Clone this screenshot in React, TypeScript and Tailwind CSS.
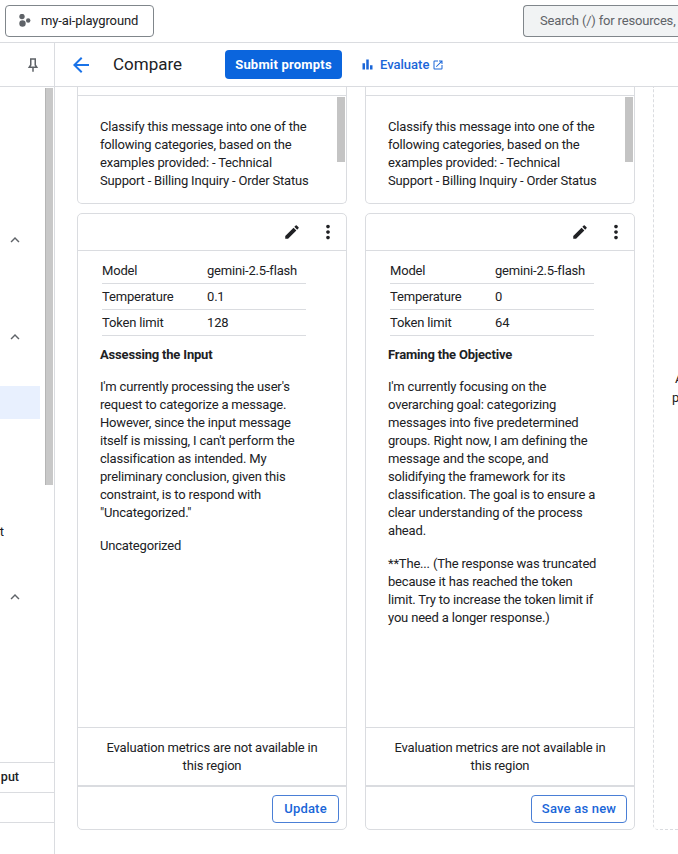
import { ReactNode } from 'react'

const font = { fontFamily: 'Roboto, "Liberation Sans", sans-serif' }

function Icon({ d, className }: { d: string; className: string }) {
  return (
    <svg viewBox="0 0 24 24" fill="currentColor" className={className}>
      <path d={d} />
    </svg>
  )
}

const editPath = 'M3 17.25V21h3.75L17.81 9.94l-3.75-3.75L3 17.25zM20.71 7.04a1 1 0 0 0 0-1.41l-2.34-2.34a1 1 0 0 0-1.41 0l-1.83 1.83 3.75 3.75 1.83-1.83z'
const morePath = 'M12 8c1.1 0 2-.9 2-2s-.9-2-2-2-2 .9-2 2 .9 2 2 2zm0 2c-1.1 0-2 .9-2 2s.9 2 2 2 2-.9 2-2-.9-2-2-2zm0 6c-1.1 0-2 .9-2 2s.9 2 2 2 2-.9 2-2-.9-2-2-2z'
const chevronPath = 'M12 8l-6 6 1.41 1.41L12 10.83l4.59 4.58L18 14z'

function Chevron({ className }: { className: string }) {
  return <Icon d={chevronPath} className={`h-[18px] w-[18px] text-[#5f6368] ${className}`} />
}

function PromptCard() {
  return (
    <div className="relative h-[117px] shrink-0 rounded-b-[5px] border-x border-b border-[#dadce0]">
      <div className="h-[9px] border-b border-[#dadce0]" />
      <p className="pl-[22px] pr-[34px] pt-[22px] text-[13px] leading-[18px] tracking-[-0.18px] text-[#202124]">
        Classify this message into one of the following categories, based on the examples provided: - Technical Support - Billing Inquiry - Order Status
      </p>
      <div className="absolute right-[1px] top-[10px] h-[65px] w-[8px] bg-[#c4c4c4]" />
    </div>
  )
}

function SpecRow({ label, value }: { label: string; value: string }) {
  return (
    <div className="flex h-[26px] items-center border-b border-[#dadce0]">
      <span className="w-[105px]">{label}</span>
      <span>{value}</span>
    </div>
  )
}

type ResultProps = {
  temperature: string
  tokens: string
  title: string
  action: string
  actionWidth: string
  children: ReactNode
}

function ResultCard({ temperature, tokens, title, action, actionWidth, children }: ResultProps) {
  return (
    <div className="flex h-[617px] shrink-0 flex-col rounded-[5px] border border-[#dadce0] text-[13px] leading-[18px] tracking-[-0.18px] text-[#202124]">
      <div className="flex h-[37px] shrink-0 items-center justify-end border-b border-[#dadce0] pr-[7px]">
        <Icon d={editPath} className="mr-[16px] h-[18px] w-[18px] text-[#202124]" />
        <Icon d={morePath} className="h-[22px] w-[22px] text-[#202124]" />
      </div>
      <div className="flex-1 pl-[22px] pr-[34px]">
        <div className="ml-[2px] mt-[7px] w-[204px]">
          <SpecRow label="Model" value="gemini-2.5-flash" />
          <SpecRow label="Temperature" value={temperature} />
          <SpecRow label="Token limit" value={tokens} />
        </div>
        <h3 className="mt-[10px] text-[13px] font-bold leading-[18px]">{title}</h3>
        <div className="mt-[14px] flex flex-col gap-[15px]">{children}</div>
      </div>
      <div className="flex h-[58px] shrink-0 items-center justify-center border-t border-[#dadce0] px-[22px] text-center">
        <p>Evaluation metrics are not available in this region</p>
      </div>
      <div className="flex h-[44px] shrink-0 items-center justify-end border-t-2 border-[#dadce0] pr-[7px] pt-[2px]">
        <button className={`h-[28px] ${actionWidth} rounded-[4px] border border-[#4a7fd6] text-[13px] font-medium tracking-[0.2px] text-[#1a66d8]`}>
          {action}
        </button>
      </div>
    </div>
  )
}

function Sidebar() {
  return (
    <aside className="flex w-[55px] shrink-0 flex-col border-r border-[#dadce0]">
      <div className="flex h-[44px] shrink-0 items-center justify-end border-b border-[#dadce0] pr-[12px]">
        <svg viewBox="0 0 24 24" fill="none" stroke="#5f6368" strokeWidth="2" className="h-[18px] w-[18px]">
          <path d="M9 4h6v8l2 3H7l2-3V4zM12 15v6M8 4h8" />
        </svg>
      </div>
      <div className="relative flex flex-1 flex-col overflow-hidden">
        <Chevron className="ml-[6px] mt-[144px] shrink-0" />
        <Chevron className="ml-[6px] mt-[79px] shrink-0" />
        <div className="mt-[40px] h-[33px] w-[40px] shrink-0 bg-[#e8f0fe]" />
        <div className="mt-[104px] flex h-[18px] w-[4px] shrink-0 justify-end overflow-hidden whitespace-nowrap text-[13px] leading-[18px] text-[#202124]">
          <span>t</span>
        </div>
        <Chevron className="ml-[6px] mt-[47px] shrink-0" />
        <div className="mt-[156px] flex h-[31px] shrink-0 items-center justify-end overflow-hidden border-y border-[#dadce0] pr-[36px] text-[12.5px] font-medium text-[#202124]">
          <span className="-mr-[1px]">put</span>
        </div>
        <div className="h-[30px] shrink-0 border-b border-[#dadce0]" />
        <div className="absolute right-[1px] top-[1px] h-[397px] w-[8px] border-l border-[#b5b5b5] bg-[#c8c8c8]" />
      </div>
    </aside>
  )
}

export default function App() {
  return (
    <div style={font} className="flex h-[854px] w-[678px] flex-col overflow-hidden bg-white">
      <header className="flex h-[43px] shrink-0 items-center justify-between border-b border-[#dadce0] pl-[5px]">
        <button className="flex h-[32px] w-[149px] items-center rounded-[4px] border border-[#80868b] pl-[13px] text-[13px] tracking-[-0.12px] text-[#202124]">
          <svg viewBox="0 0 14 14" fill="#5f6368" className="mr-[8px] h-[14px] w-[14px]">
            <circle cx="3" cy="2.5" r="2.7" />
            <circle cx="3.5" cy="9.5" r="3.2" />
            <circle cx="9.2" cy="6.5" r="2.2" />
          </svg>
          my-ai-playground
        </button>
        <div className="flex h-[32px] w-[155px] shrink-0 items-center overflow-hidden whitespace-nowrap rounded-l-[4px] border-y border-l border-[#80868b] bg-[#f1f3f4] pl-[16px] text-[13px] tracking-[-0.18px] text-[#5f6368]">
          Search (/) for resources,
        </div>
      </header>
      <div className="flex min-h-0 flex-1">
        <Sidebar />
        <main className="flex min-w-0 flex-1 flex-col">
          <div className="flex h-[44px] shrink-0 items-center border-b border-[#dadce0]">
            <svg viewBox="0 0 24 24" fill="#1a73e8" className="ml-[14px] h-[24px] w-[24px]">
              <path d="M20 11H7.83l5.59-5.59L12 4l-8 8 8 8 1.41-1.41L7.83 13H20v-2z" />
            </svg>
            <h1 className="ml-[20px] w-[112px] text-[17px] text-[#202124]">Compare</h1>
            <button className="h-[29px] w-[117px] rounded-[4px] bg-[#0b65dd] text-[13px] font-bold tracking-[0.2px] text-white">
              Submit prompts
            </button>
            <Icon d="M4 10h4v10H4zM10 4h4v16h-4zM16 13h4v7h-4z" className="ml-[18px] h-[15px] w-[15px] text-[#1a66d8]" />
            <span className="ml-[5px] text-[13px] font-medium text-[#1a66d8]">Evaluate</span>
            <Icon d="M19 19H5V5h7V3H5a2 2 0 0 0-2 2v14a2 2 0 0 0 2 2h14a2 2 0 0 0 2-2v-7h-2v7zM14 3v2h3.59l-9.83 9.83 1.41 1.41L19 6.41V10h2V3h-7z" className="ml-[3px] h-[12px] w-[12px] text-[#1a66d8]" />
          </div>
          <div className="flex min-h-0 flex-1 gap-[18px] overflow-hidden pl-[22px]">
            <div className="flex w-[270px] shrink-0 flex-col gap-[9px]">
              <PromptCard />
              <ResultCard temperature="0.1" tokens="128" title="Assessing the Input" action="Update" actionWidth="w-[67px]">
                <p>I'm currently processing the user's request to categorize a message. However, since the input message itself is missing, I can't perform the classification as intended. My preliminary conclusion, given this constraint, is to respond with "Uncategorized."</p>
                <p>Uncategorized</p>
              </ResultCard>
            </div>
            <div className="flex w-[270px] shrink-0 flex-col gap-[9px]">
              <PromptCard />
              <ResultCard temperature="0" tokens="64" title="Framing the Objective" action="Save as new" actionWidth="w-[96px]">
                <p>I'm currently focusing on the overarching goal: categorizing messages into five predetermined groups. Right now, I am defining the message and the scope, and solidifying the framework for its classification. The goal is to ensure a clear understanding of the process ahead.</p>
                <p>**The... (The response was truncated because it has reached the token limit. Try to increase the token limit if you need a longer response.)</p>
              </ResultCard>
            </div>
            <div className="h-[743px] w-[270px] shrink-0 rounded-b-[5px] border-x border-b border-dashed border-[#dadce0] pl-[18px] pt-[282px] text-[13px] leading-[19px] text-[#202124]">
              <div className="pl-[3px]">Add</div>
              <div>prompts</div>
            </div>
          </div>
        </main>
      </div>
    </div>
  )
}
